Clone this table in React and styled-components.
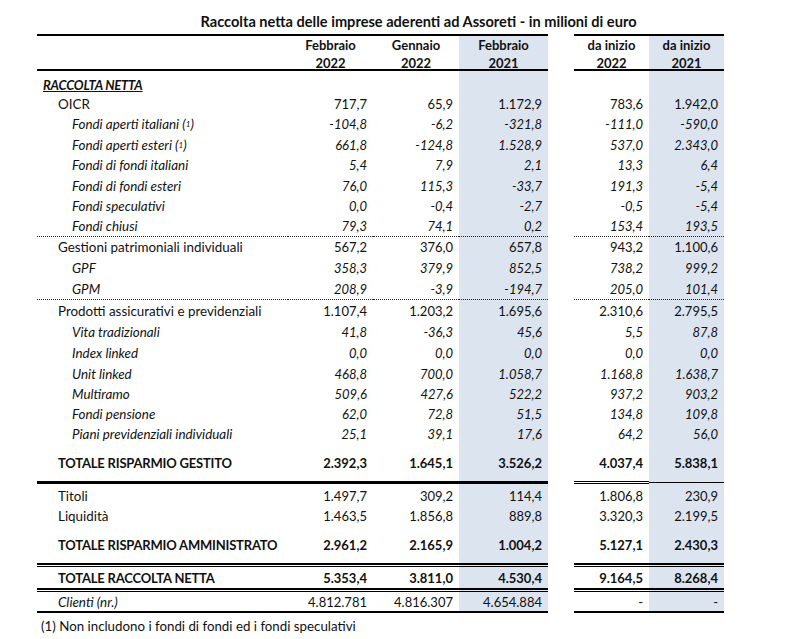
import styled, { createGlobalStyle, css } from "styled-components"

const SHADE = "#dce4f0"
const COLS = "251px 85px 86px 89px 26px 75px 75px"

const GlobalStyle = createGlobalStyle`
  * { box-sizing: border-box; }
  body {
    margin: 0;
    background: #fff;
    color: #111;
    font-family: Lato, "Liberation Sans", sans-serif;
    font-size: 13px;
  }
`

const Page = styled.div`
  padding-left: 37px;
  width: 796px;
`

const Title = styled.h1`
  margin: 0;
  height: 34px;
  padding: 10px 0 0 76px;
  width: 687px;
  font-size: 14.6px;
  font-weight: 700;
  text-align: center;
  line-height: 24px;
`

const Grid = styled.div`
  display: grid;
  grid-template-columns: ${COLS};
  height: ${(p) => p.$h}px;
`

const Cell = styled.div`
  display: flex;
  align-items: center;
  justify-content: flex-end;
  padding: ${(p) => p.$pt || 0}px 6px 0 0;
  background: ${(p) => (p.$shade ? SHADE : "transparent")};
  white-space: nowrap;
  font-variant-numeric: tabular-nums;
  ${(p) => p.$bold && css`font-weight: 700;`}
  ${(p) => p.$italic && css`font-style: italic;`}
`

const Label = styled(Cell)`
  justify-content: flex-start;
  padding-left: ${(p) => p.$indent}px;
  padding-right: 0;
  font-size: ${(p) => (p.$bold ? 13 : 13.4)}px;
  letter-spacing: ${(p) => (p.$bold ? -0.2 : 0)}px;
  ${(p) => p.$underline && css`text-decoration: underline;`}
`

const HeadCell = styled.div`
  background: ${(p) => (p.$shade ? SHADE : "transparent")};
  text-align: center;
  font-weight: 700;
  line-height: 18px;
`

const Gap = styled.div``

const lineKinds = {
  solid: css`background: #000;`,
  dotted: css`border-top: 1px dotted #222;`,
  double: css`
    border-top: 2px solid #000;
    border-bottom: 1px solid #000;
  `,
  doubleThin: css`
    border-top: 1px solid #000;
    border-bottom: 1px solid #000;
  `,
  single: css`
    background-image: linear-gradient(to bottom, transparent 1px, #000 1px, #000 2px, transparent 2px);
  `,
}

const LineCell = styled.div`
  background-color: ${(p) => (p.$shade ? SHADE : "transparent")};
  ${(p) => lineKinds[p.$kind]}
`

const Sup = styled.sup`
  font-size: 8px;
  vertical-align: 4px;
  line-height: 0;
`

const Footnote = styled.div`
  padding: 5px 0 0 4px;
  line-height: 16px;
  font-size: 13.3px;
`

const styles = {
  plain: { indent: 21 },
  sub: { indent: 35, italic: true },
  total: { indent: 21, bold: true },
  clienti: { indent: 21, italicLabel: true },
}

const Line = ({ h, left, right, right2, shade = true }) => (
  <Grid $h={h}>
    <LineCell $kind={left} />
    <LineCell $kind={left} />
    <LineCell $kind={left} />
    <LineCell $kind={left} $shade={shade} />
    <Gap />
    <LineCell $kind={right} />
    <LineCell $kind={right2 || right} $shade={shade} />
  </Grid>
)

const Row = ({ label, values, h = 20, pt = 0, kind = "plain" }) => {
  const s = styles[kind]
  const cellProps = (i) => ({
    $shade: i === 2 || i === 4,
    $bold: s.bold,
    $italic: s.italic,
    $pt: pt,
  })
  return (
    <Grid $h={h}>
      <Label $indent={s.indent} $bold={s.bold} $italic={s.italic || s.italicLabel} $pt={pt}>
        {label}
      </Label>
      {values.slice(0, 3).map((v, i) => (
        <Cell key={i} {...cellProps(i)}>{v}</Cell>
      ))}
      <Gap />
      {values.slice(3).map((v, i) => (
        <Cell key={i + 3} {...cellProps(i + 3)}>{v}</Cell>
      ))}
    </Grid>
  )
}

const oicr = [
  [<>Fondi aperti italiani (<Sup>1</Sup>)</>, ["-104,8", "-6,2", "-321,8", "-111,0", "-590,0"], 20],
  [<>Fondi aperti esteri (<Sup>1</Sup>)</>, ["661,8", "-124,8", "1.528,9", "537,0", "2.343,0"], 21],
  ["Fondi di fondi italiani", ["5,4", "7,9", "2,1", "13,3", "6,4"], 20],
  ["Fondi di fondi esteri", ["76,0", "115,3", "-33,7", "191,3", "-5,4"], 21],
  ["Fondi speculativi", ["0,0", "-0,4", "-2,7", "-0,5", "-5,4"], 20],
  ["Fondi chiusi", ["79,3", "74,1", "0,2", "153,4", "193,5"], 20],
]

const assicurativi = [
  ["Vita tradizionali", ["41,8", "-36,3", "45,6", "5,5", "87,8"], 21],
  ["Index linked", ["0,0", "0,0", "0,0", "0,0", "0,0"], 21],
  ["Unit linked", ["468,8", "700,0", "1.058,7", "1.168,8", "1.638,7"], 21],
  ["Multiramo", ["509,6", "427,6", "522,2", "937,2", "903,2"], 20],
  ["Fondi pensione", ["62,0", "72,8", "51,5", "134,8", "109,8"], 20],
  ["Piani previdenziali individuali", ["25,1", "39,1", "17,6", "64,2", "56,0"], 20],
]

const headers = [
  ["Febbraio", "2022"],
  ["Gennaio", "2022"],
  ["Febbraio", "2021"],
  ["da inizio", "2022"],
  ["da inizio", "2021"],
]

export default function App() {
  return (
    <Page>
      <GlobalStyle />
      <Title>Raccolta netta delle imprese aderenti ad Assoreti - in milioni di euro</Title>

      <Line h={2} left="solid" right="solid" />
      <Grid $h={33}>
        <div />
        {headers.slice(0, 3).map(([a, b], i) => (
          <HeadCell key={i} $shade={i === 2}>{a}<br />{b}</HeadCell>
        ))}
        <Gap />
        {headers.slice(3).map(([a, b], i) => (
          <HeadCell key={i + 3} $shade={i === 1}>{a}<br />{b}</HeadCell>
        ))}
      </Grid>
      <Line h={2} left="solid" right="solid" />

      <Grid $h={23}>
        <Label $indent={6} $bold $italic $underline $pt={5}>RACCOLTA NETTA</Label>
        <div /><div /><Cell $shade /><Gap /><div /><Cell $shade />
      </Grid>

      <Row label="OICR" values={["717,7", "65,9", "1.172,9", "783,6", "1.942,0"]} />
      {oicr.map(([l, v, h], i) => (
        <Row key={i} kind="sub" label={l} values={v} h={h} />
      ))}
      <Line h={1} left="dotted" right="dotted" />

      <Row label="Gestioni patrimoniali individuali" values={["567,2", "376,0", "657,8", "943,2", "1.100,6"]} />
      <Row kind="sub" label="GPF" values={["358,3", "379,9", "852,5", "738,2", "999,2"]} h={21} />
      <Row kind="sub" label="GPM" values={["208,9", "-3,9", "-194,7", "205,0", "101,4"]} h={21} />
      <Line h={1} left="dotted" right="dotted" />

      <Row label="Prodotti assicurativi e previdenziali" values={["1.107,4", "1.203,2", "1.695,6", "2.310,6", "2.795,5"]} h={21} />
      {assicurativi.map(([l, v, h], i) => (
        <Row key={i} kind="sub" label={l} values={v} h={h} />
      ))}

      <Row kind="total" label="TOTALE RISPARMIO GESTITO" values={["2.392,3", "1.645,1", "3.526,2", "4.037,4", "5.838,1"]} h={37} />
      <Line h={3} left="solid" right="doubleThin" right2="single" />

      <Row label="Titoli" values={["1.497,7", "309,2", "114,4", "1.806,8", "230,9"]} h={22} pt={2} />
      <Row label="Liquidità" values={["1.463,5", "1.856,8", "889,8", "3.320,3", "2.199,5"]} />
      <Row kind="total" label="TOTALE RISPARMIO AMMINISTRATO" values={["2.961,2", "2.165,9", "1.004,2", "5.127,1", "2.430,3"]} h={37} />
      <Line h={4} left="double" right="double" />

      <Row kind="total" label="TOTALE RACCOLTA NETTA" values={["5.353,4", "3.811,0", "4.530,4", "9.164,5", "8.268,4"]} h={21} />
      <Line h={4} left="double" right="double" />
      <Row kind="clienti" label="Clienti (nr.)" values={["4.812.781", "4.816.307", "4.654.884", "-", "-"]} h={19} />
      <Line h={2} left="solid" right="solid" />

      <Footnote>(1) Non includono i fondi di fondi ed i fondi speculativi</Footnote>
    </Page>
  )
}
